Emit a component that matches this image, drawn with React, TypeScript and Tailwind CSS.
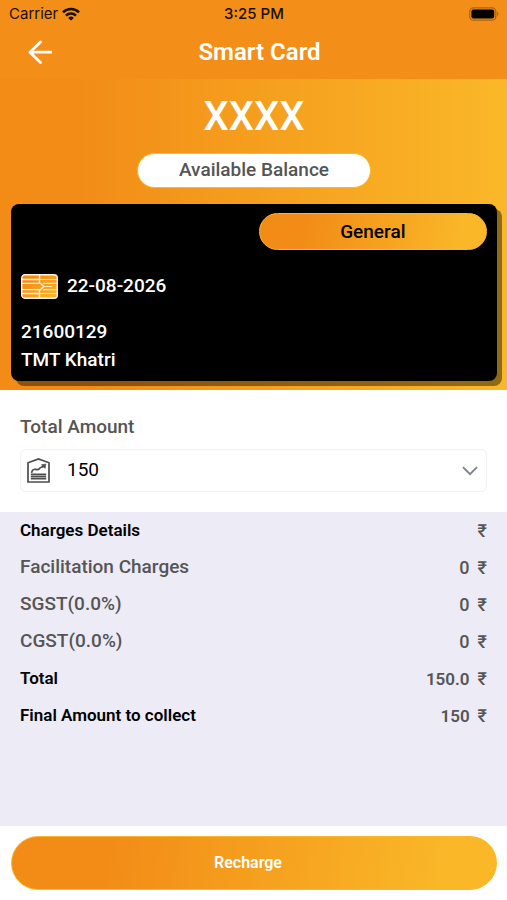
import { useState } from "react";

interface Charge {
    label: string;
    value: string;
    strong?: boolean;
}

const charges: Charge[] = [
    { label: "Facilitation Charges", value: "0" },
    { label: "SGST(0.0%)", value: "0" },
    { label: "CGST(0.0%)", value: "0" },
    { label: "Total", value: "150.0", strong: true },
    { label: "Final Amount to collect", value: "150", strong: true },
];

function WifiIcon() {
    return (
        <svg className="h-[14px] w-[18px]" viewBox="0 0 18 14" fill="none" stroke="#1c0f02" strokeWidth="2.6">
            <path d="M1 5.3a11.3 11.3 0 0 1 16 0" />
            <path d="M4 8.6a7 7 0 0 1 10 0" />
            <path d="M9 13.6 6.2 10.9a4 4 0 0 1 5.6 0Z" fill="#1c0f02" stroke="none" />
        </svg>
    );
}

function BatteryIcon() {
    return (
        <svg className="h-[14px] w-[30px]" viewBox="0 0 30 14">
            <rect x="0.8" y="0.8" width="26" height="12.4" rx="3.8" fill="none" stroke="#a9640f" strokeWidth="1.3" />
            <rect x="2.4" y="2.4" width="22.8" height="9.2" rx="2" fill="#000" />
            <path d="M28.2 4.8a2.6 2.6 0 0 1 0 4.4Z" fill="#a9640f" />
        </svg>
    );
}

function BackIcon() {
    return (
        <svg className="h-6 w-6" viewBox="0 0 24 24" fill="none" stroke="#fff" strokeWidth="2.8" strokeLinecap="round" strokeLinejoin="round">
            <path d="M12.5 2 2 12.2 12.5 22.4M2.2 12.2h21" />
        </svg>
    );
}

function ChipIcon() {
    return (
        <svg className="h-[25px] w-[37px]" viewBox="0 0 37 25" fill="none">
            <defs>
                <linearGradient id="chip" x1="0" y1="0" x2="1" y2="1">
                    <stop offset="0.2" stopColor="#f28c17" />
                    <stop offset="1" stopColor="#fab828" />
                </linearGradient>
            </defs>
            <rect x="0.7" y="0.7" width="35.6" height="23.6" rx="3.2" fill="url(#chip)" stroke="#fff1d8" strokeWidth="1.4" />
            <g stroke="#fff3de" strokeWidth="1.4">
                <path d="M1 5.5h17.5M1 9.4h18.5l3.5 3.1-3.5 3.1H1M1 19.5h17.5" />
                <path d="M18.5 1v8.4M18.5 15.6V24" />
                <path d="M18.500 5.5H36M22 9.400h14M23 12.500h8M22 15.600h14M18.500 19.500H36" strokeWidth="1.1" opacity="0.8" />
            </g>
        </svg>
    );
}

function AmountIcon() {
    return (
        <svg className="h-[25px] w-[23px]" viewBox="0 0 23 25" fill="none" stroke="#4d4d4d" strokeWidth="1.7">
            <path d="M1 24V4.8L11.5 1 22 4.8V24Z" />
            <path d="M4.6 14.8c.4-2.6 2.2-4 4-3.4 2.2.8 3.2.2 4.2-1.2 1-1.2 2.6-.6 4.4-2.6" />
            <path d="m14.4 6.8 4.4-.8-.6 4.4Z" fill="#4d4d4d" strokeWidth="0.6" />
            <path d="M3.8 16.4h15.4M3.8 18.6h15.4M3.8 20.8h15.4" strokeWidth="1.6" />
        </svg>
    );
}

function Header() {
    return (
        <header className="bg-[#f38f19] pb-[3px]">
            <div className="grid h-7 grid-cols-3 items-center pr-2 pl-[9px] font-['Inter',sans-serif] text-[15px] text-[#1c0f02]">
                <div className="flex items-center gap-1">
                    <span>Carrier</span>
                    <WifiIcon />
                </div>
                <span className="text-center font-medium">3:25 PM</span>
                <div className="flex justify-end">
                    <BatteryIcon />
                </div>
            </div>
            <div className="grid h-12 grid-cols-[68px_1fr_56px] items-center px-3">
                <button type="button" aria-label="Back" className="flex h-10 w-14 items-center justify-center">
                    <BackIcon />
                </button>
                <h1 className="text-center text-2xl font-semibold text-white">Smart Card</h1>
            </div>
        </header>
    );
}

function BalanceCard() {
    return (
        <section className="bg-[linear-gradient(90deg,#f28c17_15%,#fab828_100%)] pt-4 pr-[10px] pb-[9px] pl-[11px]">
            <p className="text-center text-[40px] leading-[44px] font-medium text-white">XXXX</p>
            <p className="mx-auto mt-[14px] flex h-[35px] w-[48%] items-center justify-center rounded-full border border-[#fab828] bg-white text-[19px] font-medium text-[#555]">
                Available Balance
            </p>
            <div className="mt-4 rounded-lg bg-black px-[10px] pt-[9px] pb-[7px] text-[19px] leading-7 font-medium text-white shadow-[5px_5px_0_rgba(0,0,0,0.42)]">
                <p className="ml-auto flex h-[37px] w-[49%] items-center justify-center rounded-full border border-[#fab828] bg-[linear-gradient(100deg,#f28c17_20%,#fab828_90%)] text-black">
                    General
                </p>
                <div className="mt-[22px] flex items-center gap-[9px]">
                    <ChipIcon />
                    <span>22-08-2026</span>
                </div>
                <p className="mt-[18px]">21600129</p>
                <p>TMT Khatri</p>
            </div>
        </section>
    );
}

function AmountSelect() {
    const [amount, setAmount] = useState("150");

    return (
        <section className="bg-white px-5 pt-6 pb-5">
            <label htmlFor="amount" className="block text-[19px] leading-[26px] font-medium text-[#555]">
                Total Amount
            </label>
            <div className="relative mt-[9px]">
                <span className="pointer-events-none absolute inset-y-0 left-[7px] flex items-center">
                    <AmountIcon />
                </span>
                <select
                    id="amount"
                    value={amount}
                    onChange={(e) => setAmount(e.target.value)}
                    className="block h-[43px] w-full appearance-none rounded-md border border-[#f1f1f5] bg-white pl-[46px] text-[19px] text-black"
                >
                    <option value="150">150</option>
                </select>
                <span className="pointer-events-none absolute inset-y-0 right-[9px] flex items-center">
                    <svg className="h-[10px] w-4" viewBox="0 0 16 10" fill="none" stroke="#7d8088" strokeWidth="1.8">
                        <path d="m1 1.2 7 7 7-7" />
                    </svg>
                </span>
            </div>
        </section>
    );
}

function ChargesTable() {
    return (
        <section className="flex-1 bg-[#ecebf6] px-5">
            <table className="w-full text-[19px] font-medium text-[#555]">
                <thead>
                    <tr className="h-[37px]">
                        <th className="text-left text-[17px] font-semibold text-black">Charges Details</th>
                        <th className="text-right text-lg font-medium">₹</th>
                    </tr>
                </thead>
                <tbody>
                    {charges.map((charge) => (
                        <tr key={charge.label} className="h-[37px]">
                            <td className={charge.strong ? "text-[17px] font-semibold text-black" : ""}>{charge.label}</td>
                            <td className="text-right text-lg">
                                <span className={charge.strong ? "mr-2 text-[17px] font-semibold" : "mr-2"}>{charge.value}</span>₹
                            </td>
                        </tr>
                    ))}
                </tbody>
            </table>
        </section>
    );
}

export default function App() {
    return (
        <main className="flex min-h-screen flex-col bg-white font-['Roboto',sans-serif]">
            <Header />
            <BalanceCard />
            <AmountSelect />
            <ChargesTable />
            <footer className="bg-white pt-[10px] pr-[10px] pb-[10px] pl-[11px]">
                <button
                    type="button"
                    className="block h-[54px] w-full rounded-full border border-[#fab828] bg-[linear-gradient(100deg,#f28c17_20%,#fab828_90%)] pr-3 text-base font-semibold text-white"
                >
                    Recharge
                </button>
            </footer>
        </main>
    );
}
